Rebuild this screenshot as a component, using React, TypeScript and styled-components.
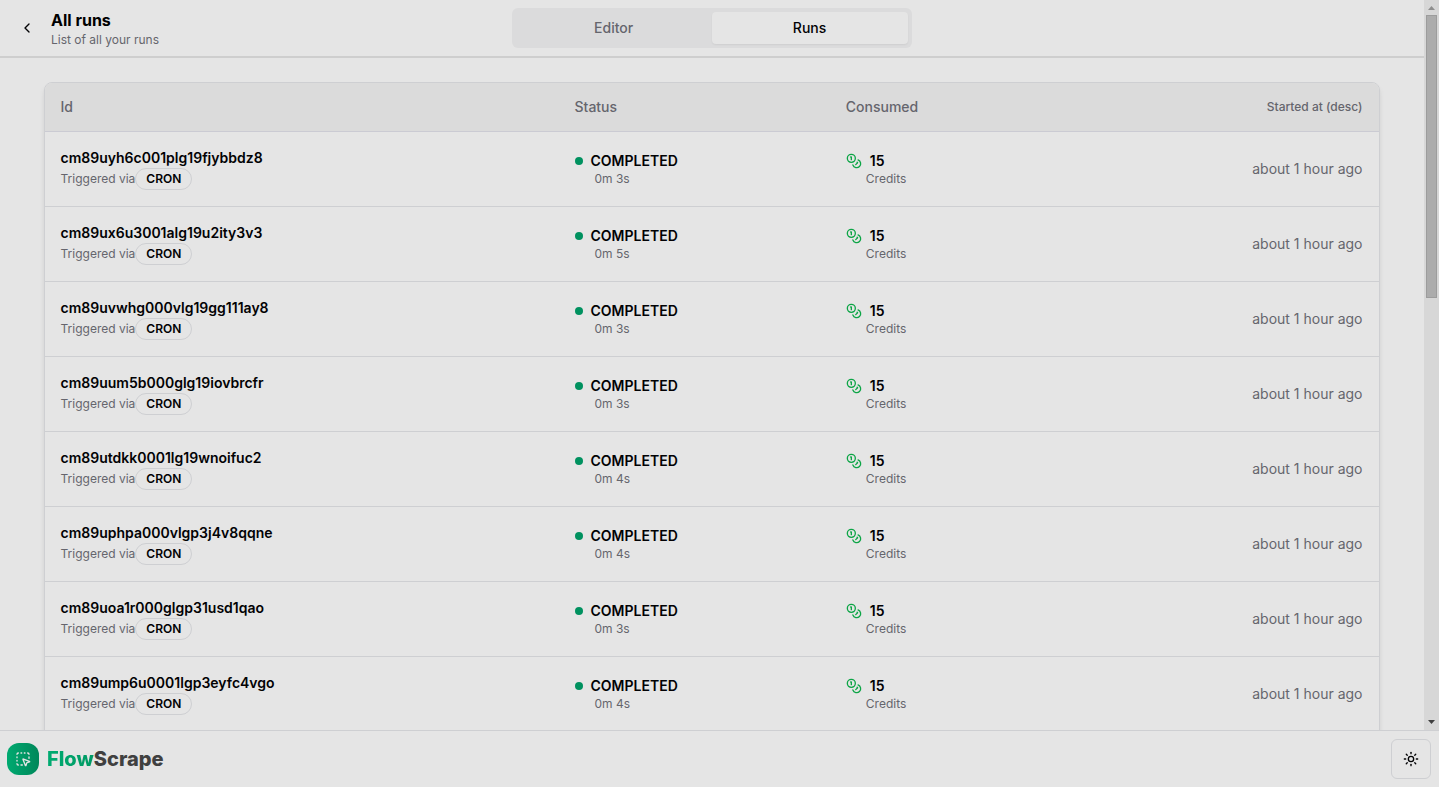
import React from "react";
import styled, { createGlobalStyle } from "styled-components";
import { ChevronLeft, Coins, SquareDashedMousePointer, Sun } from "lucide-react";

const GlobalStyle = createGlobalStyle`
  *, *::before, *::after { box-sizing: border-box; }
  body {
    margin: 0;
    background: #e5e5e5;
    color: #020204;
    font-family: Inter, "Liberation Sans", sans-serif;
    font-size: 14px;
    line-height: 20px;
    overflow: hidden;
  }
  button { font: inherit; color: inherit; background: none; border: 0; padding: 0; }
  svg { display: block; flex-shrink: 0; }
`;

const muted = "#65656d";
const line = "#cecfd2";

const Screen = styled.div`
  display: flex;
  flex-direction: column;
  height: 100vh;
  overflow: hidden;
`;

const Viewport = styled.div`
  display: flex;
  flex: 1;
  min-height: 0;
`;

const Page = styled.div`
  flex: 1;
  min-width: 0;
  overflow: hidden;
`;

const TopBar = styled.header`
  display: grid;
  grid-template-columns: 503.6px 400px 1fr;
  align-items: center;
  height: 58px;
  padding: 0 8px;
  border-bottom: 2px solid #cecece;
`;

const Heading = styled.div`
  display: flex;
  align-items: center;
  gap: 14px;
  padding-left: 9px;
`;

const BackButton = styled.button`
  display: flex;
  width: 20px;
  height: 20px;
  align-items: center;
  justify-content: center;
`;

const Title = styled.p`
  margin: 0;
  font-size: 16px;
  font-weight: 700;
  line-height: 24px;
  color: #000;
`;

const Subtitle = styled.p`
  margin: 0;
  font-size: 12px;
  line-height: 16px;
  color: ${muted};
`;

const Tabs = styled.nav`
  display: grid;
  grid-template-columns: 1fr 1fr;
  height: 40px;
  padding: 4px;
  border-radius: 6px;
  background: #dbdbdc;
`;

const Tab = styled.button<{ $active?: boolean }>`
  border-radius: 4px;
  font-weight: 500;
  color: ${(p) => (p.$active ? "#020204" : muted)};
  background: ${(p) => (p.$active ? "#e5e5e5" : "transparent")};
  box-shadow: ${(p) => (p.$active ? "0 1px 2px rgba(0,0,0,.06)" : "none")};
`;

const Main = styled.main`
  padding: 24px 44px;
`;

const TableFrame = styled.div`
  border: 1px solid ${line};
  border-radius: 8px;
  overflow: hidden;
  box-shadow: 0 4px 6px -1px rgba(0,0,0,.09), 0 2px 4px -2px rgba(0,0,0,.09);
`;

const Row = styled.div`
  display: grid;
  grid-template-columns: 514px 271.3px 1fr auto;
  align-items: center;
  height: 75px;
  padding: 0 16.5px 0 15.5px;
  border-bottom: 1px solid ${line};
`;

const HeadRow = styled(Row)`
  height: 49px;
  background: #dbdbdb;
  border-bottom-color: #cbcbd3;
  font-weight: 500;
  color: ${muted};
`;

const SortLabel = styled.span`
  font-size: 12px;
`;

const Cell = styled.div`
  display: flex;
  flex-direction: column;
`;

const RunId = styled.span`
  font-weight: 600;
`;

const Trigger = styled.div`
  display: flex;
  align-items: center;
  font-size: 12px;
  line-height: 16px;
  color: ${muted};
`;

const Badge = styled.span`
  padding: 2px 10px;
  border: 1px solid ${line};
  border-radius: 999px;
  font-weight: 600;
  color: #020204;
`;

const Primary = styled.div`
  display: flex;
  align-items: center;
  gap: 8px;
  font-weight: 600;
`;

const Dot = styled.span`
  width: 8px;
  height: 8px;
  border-radius: 50%;
  background: #00915f;
`;

const Note = styled.span`
  padding-left: 20px;
  font-size: 12px;
  line-height: 16px;
  color: ${muted};
`;

const Started = styled.span`
  color: ${muted};
`;

const TableTail = styled.div`
  height: 40px;
`;

const Scrollbar = styled.div`
  display: flex;
  flex-direction: column;
  align-items: center;
  width: 15px;
  background: #d7d7d7;
`;

const ScrollArrow = styled.div<{ $down?: boolean }>`
  display: flex;
  align-items: center;
  justify-content: center;
  height: ${(p) => (p.$down ? "17px" : "15px")};
  color: ${(p) => (p.$down ? "#404040" : "#8e8e8e")};
`;

const Thumb = styled.div`
  width: 11px;
  height: 283px;
  margin-bottom: auto;
  border: 1px solid #9c9c9c;
  background: #acacac;
`;

const BottomBar = styled.footer`
  display: flex;
  align-items: center;
  justify-content: space-between;
  height: 57px;
  padding: 0 8px 0 7px;
  border-top: 1px solid ${line};
`;

const Brand = styled.div`
  display: flex;
  align-items: center;
  gap: 8px;
  font-size: 20px;
  font-weight: 800;
  line-height: 28px;
  color: #404040;
`;

const BrandMark = styled.div`
  display: flex;
  align-items: center;
  justify-content: center;
  width: 32px;
  height: 32px;
  border-radius: 12px;
  background: linear-gradient(90deg, #00aa70, #00875a);
  color: #e5e5e5;
`;

const BrandAccent = styled.span`
  background: linear-gradient(90deg, #00ab71, #009a64);
  background-clip: text;
  color: transparent;
`;

const ThemeButton = styled.button`
  display: flex;
  align-items: center;
  justify-content: center;
  width: 40px;
  height: 40px;
  border: 1px solid ${line};
  border-radius: 6px;
`;

const runs = [
  { id: "cm89uyh6c001plg19fjybbdz8", duration: "0m 3s" },
  { id: "cm89ux6u3001alg19u2ity3v3", duration: "0m 5s" },
  { id: "cm89uvwhg000vlg19gg111ay8", duration: "0m 3s" },
  { id: "cm89uum5b000glg19iovbrcfr", duration: "0m 3s" },
  { id: "cm89utdkk0001lg19wnoifuc2", duration: "0m 4s" },
  { id: "cm89uphpa000vlgp3j4v8qqne", duration: "0m 4s" },
  { id: "cm89uoa1r000glgp31usd1qao", duration: "0m 3s" },
  { id: "cm89ump6u0001lgp3eyfc4vgo", duration: "0m 4s" },
];

function RunRow({ id, duration }: { id: string; duration: string }) {
  return (
    <Row>
      <Cell>
        <RunId>{id}</RunId>
        <Trigger>
          <span>Triggered via</span>
          <Badge>CRON</Badge>
        </Trigger>
      </Cell>
      <Cell>
        <Primary>
          <Dot />
          COMPLETED
        </Primary>
        <Note>{duration}</Note>
      </Cell>
      <Cell>
        <Primary>
          <Coins size={16} color="#0da546" />
          15
        </Primary>
        <Note>Credits</Note>
      </Cell>
      <Started>about 1 hour ago</Started>
    </Row>
  );
}

export default function App() {
  return (
    <Screen>
      <GlobalStyle />
      <Viewport>
        <Page>
          <TopBar>
            <Heading>
              <BackButton aria-label="Back">
                <ChevronLeft size={16} />
              </BackButton>
              <div>
                <Title>All runs</Title>
                <Subtitle>List of all your runs</Subtitle>
              </div>
            </Heading>
            <Tabs>
              <Tab>Editor</Tab>
              <Tab $active>Runs</Tab>
            </Tabs>
          </TopBar>
          <Main>
            <TableFrame>
              <HeadRow>
                <span>Id</span>
                <span>Status</span>
                <span>Consumed</span>
                <SortLabel>Started at (desc)</SortLabel>
              </HeadRow>
              {runs.map((run) => (
                <RunRow key={run.id} {...run} />
              ))}
              <TableTail />
            </TableFrame>
          </Main>
        </Page>
        <Scrollbar>
          <ScrollArrow>
            <svg width="7" height="4" viewBox="0 0 7 4" fill="currentColor">
              <path d="M3.5 0 7 4H0z" />
            </svg>
          </ScrollArrow>
          <Thumb />
          <ScrollArrow $down>
            <svg width="7" height="4" viewBox="0 0 7 4" fill="currentColor">
              <path d="M0 0h7L3.5 4z" />
            </svg>
          </ScrollArrow>
        </Scrollbar>
      </Viewport>
      <BottomBar>
        <Brand>
          <BrandMark>
            <SquareDashedMousePointer size={16} />
          </BrandMark>
          <span>
            <BrandAccent>Flow</BrandAccent>
            Scrape
          </span>
        </Brand>
        <ThemeButton aria-label="Toggle theme">
          <Sun size={16} />
        </ThemeButton>
      </BottomBar>
    </Screen>
  );
}
